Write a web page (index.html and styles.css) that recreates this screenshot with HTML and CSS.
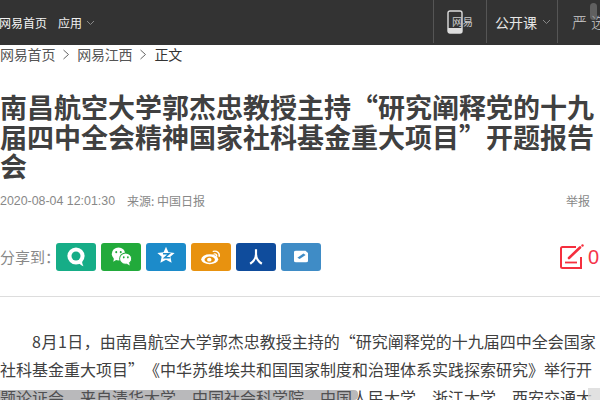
FILE: index.html
```html
<!DOCTYPE html>
<html lang="zh">
<head>
<meta charset="utf-8">
<title>正文</title>
<link rel="stylesheet" href="styles.css">
</head>
<body>
<header class="topbar">
  <nav class="nav-left">
    <a class="nav-home">网易首页</a>
    <a class="nav-app">应用<svg class="caret" width="9" height="6" viewBox="0 0 9 6"><path d="M1 1l3.500 3.500L8 1" fill="none" stroke="#888" stroke-width="1"/></svg></a>
  </nav>
  <nav class="nav-right">
    <div class="nav-cell cell-phone">
      <svg width="16" height="24" viewBox="0 0 16 24"><rect x="1" y="1" width="14" height="22" rx="2" fill="none" stroke="#ddd" stroke-width="1.400"/><rect x="1" y="18" width="14" height="5" fill="#ddd"/></svg>
      <span class="phone-label">网易</span>
    </div>
    <div class="nav-cell cell-open">公开课<svg class="caret" width="9" height="6" viewBox="0 0 9 6"><path d="M1 1l3.500 3.500L8 1" fill="none" stroke="#888" stroke-width="1"/></svg></div>
    <div class="nav-cell cell-yan">严选</div>
  </nav>
</header>

<div class="crumbs">
  <a>网易首页</a>
  <svg class="chev" width="8" height="11" viewBox="0 0 8 11"><path d="M1.500 1l5 4.500-5 4.500" fill="none" stroke="#666" stroke-width="1"/></svg>
  <a>网易江西</a>
  <svg class="chev" width="8" height="11" viewBox="0 0 8 11"><path d="M1.500 1l5 4.500-5 4.500" fill="none" stroke="#666" stroke-width="1"/></svg>
  <span class="crumb-now">正文</span>
</div>

<h1 class="title">南昌航空大学郭杰忠教授主持“研究阐释党的十九届四中全会精神国家社科基金重大项目”开题报告会</h1>

<div class="meta">
  <span class="meta-date">2020-08-04 12:01:30</span>
  <span class="meta-source">来源: 中国日报</span>
  <a class="meta-report">举报</a>
</div>

<div class="share-row">
  <span class="share-label">分享到：</span>
  <a class="share share-yixin"><svg width="26" height="24" viewBox="0 0 26 24"><circle cx="13" cy="11" r="8.600" fill="#fff"/><path d="M15 18c1.500.5 3 2.200 5.500 3.300-1-1.600-1.300-3.500-1.500-5.300z" fill="#fff"/><circle cx="13" cy="11" r="4.500" fill="#16ad87"/></svg></a>
  <a class="share share-wechat"><svg width="21" height="19" viewBox="2 2 28 22" preserveAspectRatio="none"><ellipse cx="12" cy="10" rx="9" ry="7.500" fill="#fff"/><path d="M6 15l-1 4 5-2.500z" fill="#fff"/><ellipse cx="21.500" cy="15.500" rx="8" ry="6.500" fill="#fff" stroke="#22aa3b" stroke-width="1.200"/><path d="M26 20l1 3.500-4.500-2.500z" fill="#fff"/><circle cx="9" cy="8" r="1.300" fill="#22aa3b"/><circle cx="15" cy="8" r="1.300" fill="#22aa3b"/><circle cx="19" cy="14" r="1.200" fill="#22aa3b"/><circle cx="24.500" cy="14" r="1.200" fill="#22aa3b"/></svg></a>
  <a class="share share-qzone"><svg class="icon-up" width="20" height="19" viewBox="0 0 22 22"><path d="M11 1l2.800 6.300 7.200.7-5 4.500 1.500 7L11 15.900 4.500 19.500 6 12.500 1 8l7.200-.7z" fill="#fff"/><path d="M7.500 9h7l-5 4.500h6" fill="none" stroke="#1c8bca" stroke-width="1.800"/></svg></a>
  <a class="share share-weibo"><svg width="25" height="18" viewBox="0 0 28 24" preserveAspectRatio="none"><ellipse cx="12" cy="15" rx="9.500" ry="6.800" fill="#fff"/><ellipse cx="12" cy="15.500" rx="5.800" ry="4.200" fill="#e8920f"/><circle cx="11.500" cy="15.500" r="2.500" fill="#fff"/><path d="M16 4.500c4-1.200 7.500 2 6.500 6.500M17 8c1.800-.4 3 .9 2.600 2.700" fill="none" stroke="#fff" stroke-width="1.700" stroke-linecap="round"/></svg></a>
  <a class="share share-renren"><svg width="20" height="18" viewBox="0 0 20 20"><path d="M10 1.500v5c0 5-2.500 8.500-6.500 11M10 6.500c0 5 2.500 8.500 6.500 11" fill="none" stroke="#fff" stroke-width="2.400"/></svg></a>
  <a class="share share-note"><svg width="20" height="13" viewBox="0 0 20 20" preserveAspectRatio="none"><path d="M5 1h9.500l2.500 3.500V17a2 2 0 0 1-2 2H5a2 2 0 0 1-2-2V3a2 2 0 0 1 2-2z" fill="#fff"/><path d="M7.500 13l6-6.500" stroke="#3f8cc6" stroke-width="3"/></svg></a>
  <a class="comment">
    <svg width="25" height="26" viewBox="0 0 25 26"><path d="M17 3H3.500A1.500 1.500 0 0 0 2 4.500v18A1.500 1.500 0 0 0 3.500 24H22V13" fill="none" stroke="#f52f3e" stroke-width="2"/><path d="M10 14L21 3.500" stroke="#f52f3e" stroke-width="2.600" stroke-linecap="round"/><circle cx="23.500" cy="1.500" r="1.200" fill="#f52f3e"/><path d="M6 18.500h12" stroke="#f52f3e" stroke-width="1.800"/></svg>
    <span class="comment-count">0</span>
  </a>
</div>

<article class="body">
  <p><span class="date-run">8月1日</span>，由南昌航空大学郭杰忠教授主持的“研究阐释党的十九届四中全会国家社科基金重大项目”《中华苏维埃共和国国家制度和治理体系实践探索研究》举行开题论证会，来自清华大学、中国社会科学院、中国人民大学、浙江大学、西安交通大学的专家学者参加。</p>
</article>

<div class="scroll-v"></div>
<div class="scroll-h"></div>
<div class="scroll-h-end"></div>
</body>
</html>
```
FILE: styles.css
```css
* { box-sizing: border-box; }
html, body { margin: 0; padding: 0; height: 400px; overflow: hidden; background: #fff; }
body { width: 600px; font-family: "Noto Sans CJK SC", "Liberation Sans", sans-serif; color: #333; text-spacing-trim: space-all; }

.topbar { height: 45px; background: #333; color: #e6e6e6; display: flex; justify-content: space-between; font-size: 14px; }
.nav-left { display: flex; align-items: center; gap: 11px; }
.nav-home { margin-left: -1px; color: #f4f4f4; font-size: 12px; }
.nav-app { font-size: 12px; display: flex; align-items: center; gap: 4px; color: #f0f0f0; }
.nav-right { display: flex; width: 167px; }
.nav-cell { border-left: 1px solid #555; display: flex; align-items: center; height: 43px; }
.cell-phone { width: 53px; padding-left: 13px; position: relative; }
.phone-label { position: absolute; left: 18px; top: 14px; font-size: 10.500px; color: #ccc; }
.cell-open { width: 71px; padding-left: 8px; gap: 5px; font-size: 14px; }
.cell-yan { flex: 1; padding-left: 14px; color: #ccc; font-size: 15px; font-weight: 300; letter-spacing: 4px; white-space: nowrap; overflow: hidden; }

.crumbs { height: 18px; display: flex; align-items: center; font-size: 14px; line-height: 18px; color: #555; letter-spacing: -0.2px; }
.chev { margin: 0 7px; }
.crumb-now { color: #333; }

.title { margin: 29px 0 0; font-size: 27px; line-height: 29.500px; font-weight: 700; color: #404040; }

.meta { margin-top: 11px; display: flex; align-items: center; font-size: 12px; line-height: 18px; color: #888; }
.meta-date { font-family: "Liberation Sans", sans-serif; font-size: 12.400px; }
.meta-source { margin-left: 12px; }
.meta-report { margin-left: auto; margin-right: 10px; }

.share-row { margin-top: 33px; height: 28px; display: flex; align-items: center; gap: 5px; }
.share-label { flex: 0 0 51px; min-width: 0; font-size: 15px; line-height: 28px; color: #888; white-space: nowrap; }
.share { width: 40px; height: 28px; border-radius: 3px; display: flex; align-items: center; justify-content: center; }
.share-yixin { background: #16ad87; }
.share-wechat { background: #22aa3b; }
.share-qzone { background: #1c8bca; }
.share-weibo { background: #e8920f; }
.share-renren { background: #0f4c9c; }
.share-note { background: #3f8cc6; }
.icon-up { margin-bottom: 3px; }
.comment { margin-left: auto; display: flex; align-items: center; gap: 4px; }
.comment-count { width: 12px; color: #f5344a; font-size: 20px; line-height: 26px; font-family: "Liberation Sans", sans-serif; overflow: hidden; }

.body { margin-top: 25px; border-top: 1px solid #ddd; padding-top: 30px; }
.body p { margin: 0; font-size: 16px; line-height: 28px; text-indent: 32px; color: #404040; }
.date-run { letter-spacing: 0.5px; }

.scroll-v { position: absolute; left: 590px; top: 3px; width: 7px; height: 17px; border-radius: 4px; background: rgba(150, 150, 150, 0.45); }
.scroll-h { position: absolute; left: 0; top: 390px; width: 358px; height: 10px; border-radius: 0 4px 4px 0; background: rgba(100, 100, 105, 0.45); }
.scroll-h-end { position: absolute; left: 588px; top: 388px; width: 12px; height: 12px; background: rgba(215, 215, 215, 0.75); }
```
